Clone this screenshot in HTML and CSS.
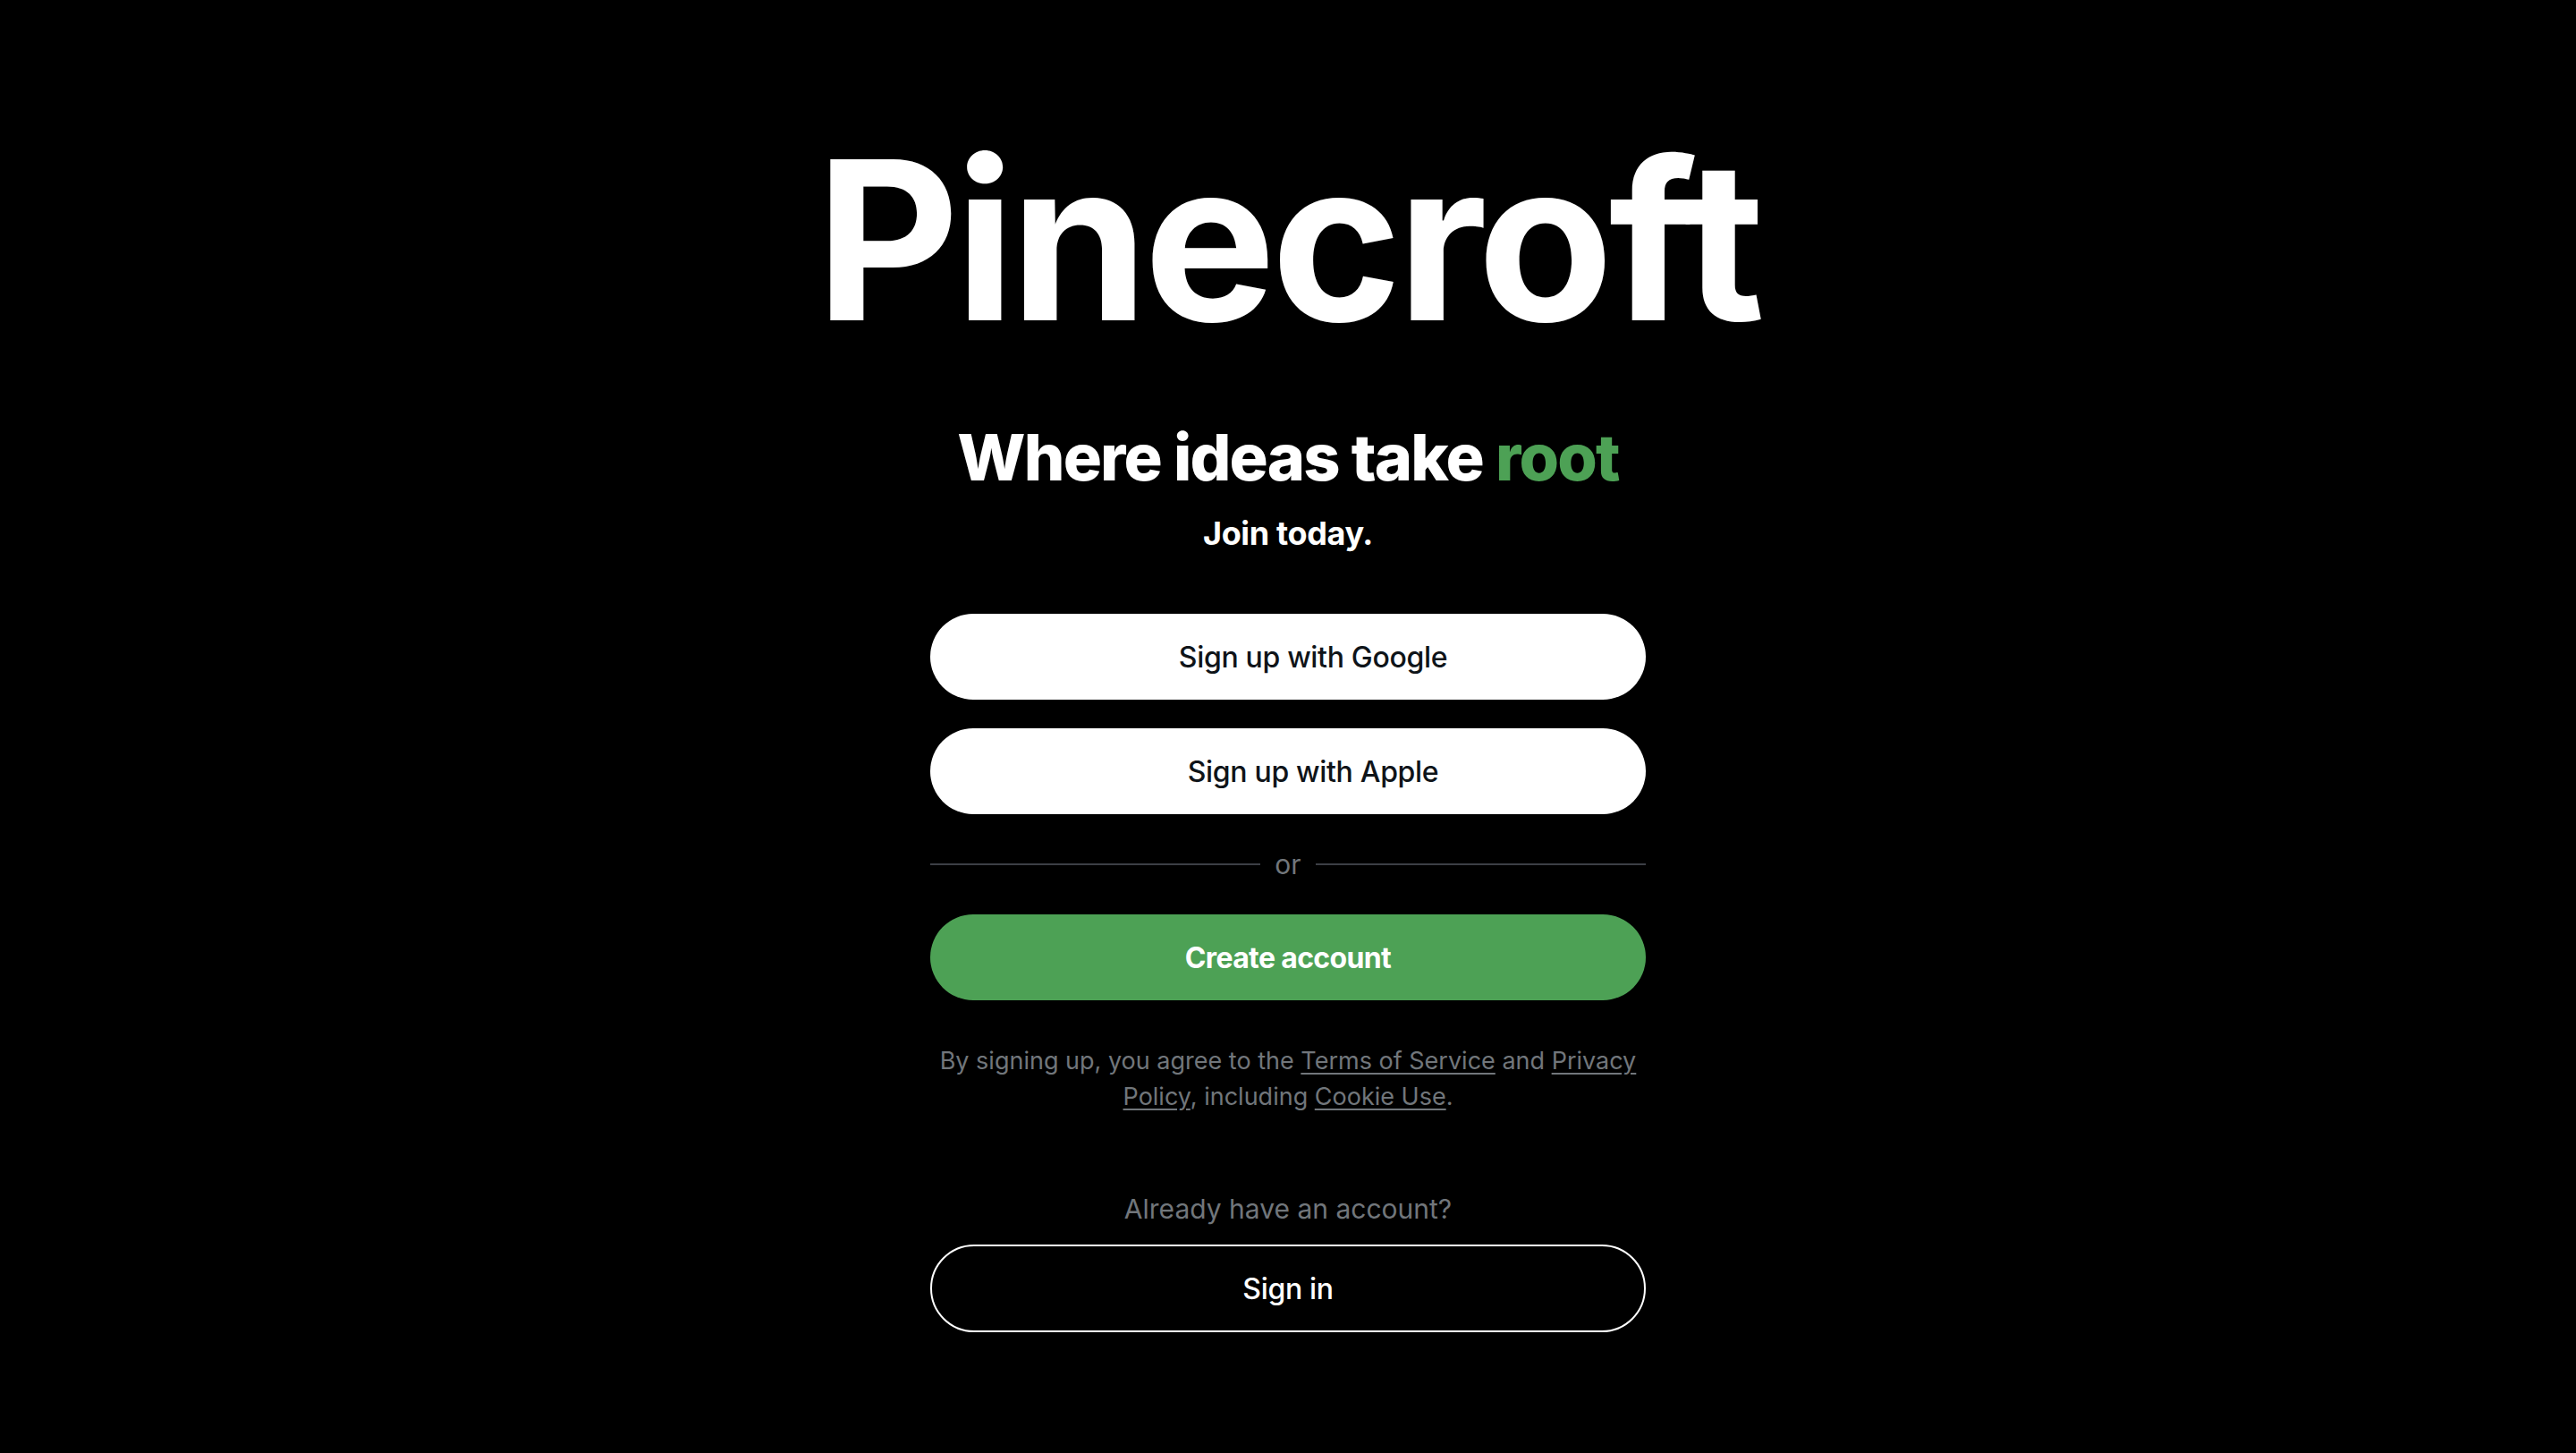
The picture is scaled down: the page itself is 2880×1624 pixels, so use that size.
FILE: index.html
```html
<!DOCTYPE html>
<html lang="en">
<head>
<meta charset="utf-8">
<title>Pinecroft — Join today</title>
<link rel="stylesheet" href="styles.css">
</head>
<body>
<main class="page">
  <h1 class="brand">Pinecroft</h1>
  <h2 class="tagline">Where ideas take <span class="accent">root</span></h2>
  <p class="join">Join today.</p>

  <div class="actions">
    <button class="btn btn-light btn-provider"><span class="provider-icon"></span><span>Sign up with Google</span></button>
    <button class="btn btn-light btn-provider"><span class="provider-icon"></span><span>Sign up with Apple</span></button>

    <div class="divider"><span class="divider-line"></span><span class="divider-text">or</span><span class="divider-line"></span></div>

    <button class="btn btn-green">Create account</button>

    <p class="terms">By signing up, you agree to the <a href="#">Terms of Service</a> and <a href="#">Privacy Policy</a>, including <a href="#">Cookie Use</a>.</p>

    <p class="already">Already have an account?</p>
    <button class="btn btn-outline">Sign in</button>
  </div>
</main>
</body>
</html>
```
FILE: styles.css
```css
* { box-sizing: border-box; }
html, body { margin: 0; padding: 0; background: #000; }
body {
  font-family: Inter, "Noto Sans", "Liberation Sans", sans-serif;
  color: #fff;
}
.page {
  display: flex;
  flex-direction: column;
  align-items: center;
  padding-top: 144px;
}
.brand {
  margin: 0;
  font-size: 248px;
  line-height: 1;
  font-weight: 700;
  letter-spacing: -0.021em;
}
.tagline {
  margin: 76px 0 0;
  font-size: 72px;
  line-height: 1.2;
  font-weight: 800;
  letter-spacing: -0.025em;
}
.accent { color: #4da155; }
.join {
  margin: 20px 0 0;
  font-size: 36px;
  line-height: 44px;
  font-weight: 700;
  letter-spacing: -0.01em;
}
.actions {
  width: 800px;
  margin-top: 68px;
  display: flex;
  flex-direction: column;
  align-items: stretch;
}
.btn {
  height: 96px;
  border-radius: 48px;
  border: none;
  font-family: inherit;
  font-size: 32px;
  font-weight: 500;
  letter-spacing: -0.01em;
  display: flex;
  align-items: center;
  justify-content: center;
  gap: 16px;
  cursor: pointer;
}
.btn-light { background: #fff; color: #0f1419; }
.btn-provider + .btn-provider { margin-top: 32px; }
.provider-icon { width: 40px; height: 40px; }
.divider {
  margin-top: 36px;
  height: 40px;
  display: flex;
  align-items: center;
  gap: 16px;
}
.divider-line { flex: 1; height: 2px; background: #3c3f45; }
.divider-text { font-size: 30px; line-height: 40px; color: #71767b; }
.btn-green {
  margin-top: 36px;
  background: #4da155;
  color: #fff;
  font-weight: 700;
  letter-spacing: -0.02em;
}
.terms {
  margin: 48px 0 0;
  padding: 0;
  font-size: 27px;
  line-height: 40px;
  color: #71767b;
  text-align: center;
}
.terms a { color: #71767b; text-decoration: underline; text-underline-offset: 4px; }
.already {
  margin: 85px 0 0;
  font-size: 30px;
  line-height: 40px;
  color: #71767b;
  text-align: center;
}
.btn-outline {
  margin-top: 20px;
  height: 98px;
  background: #000;
  color: #fff;
  border: 2px solid #fff;
  border-radius: 49px;
}
```
